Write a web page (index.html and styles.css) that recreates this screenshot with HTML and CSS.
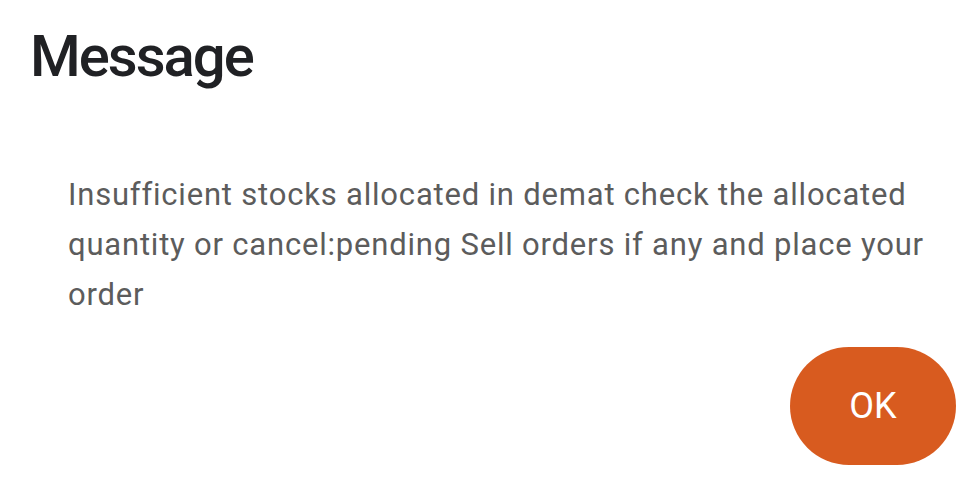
FILE: index.html
```html
<!DOCTYPE html>
<html lang="en">
<head>
    <meta charset="UTF-8">
    <meta name="viewport" content="width=device-width, initial-scale=1.0">
    <title>Message</title>
    <link rel="stylesheet" href="styles.css">
</head>
<body>
    <div class="dialog">
        <h1 class="title">Message</h1>
        <p class="message">Insufficient stocks allocated in demat check the allocated quantity or cancel:pending Sell orders if any and place your order</p>
        <div class="actions">
            <button class="ok">OK</button>
        </div>
    </div>
</body>
</html>
```

FILE: styles.css
```css
body {
    font-family: Roboto, "Noto Sans", sans-serif;
    margin: 0;
    padding: 0;
    background-color: #fff;
}
.dialog {
    width: 979px;
    height: 498px;
    box-sizing: border-box;
    padding: 27px 23px 0 30px;
}
.title {
    margin: 0;
    font-size: 58px;
    line-height: 58px;
    font-weight: 500;
    letter-spacing: -2px;
    color: #202124;
}
.message {
    margin: 85px 0 0 38px;
    font-size: 31px;
    line-height: 50px;
    letter-spacing: 0.8px;
    color: #5c5c5c;
}
.actions {
    display: flex;
    justify-content: flex-end;
    margin-top: 27px;
}
.ok {
    width: 166px;
    height: 118px;
    border: none;
    border-radius: 59px;
    background-color: #d85b1f;
    color: #fff;
    font-family: Roboto, sans-serif;
    font-size: 36px;
    padding: 0;
}
```
